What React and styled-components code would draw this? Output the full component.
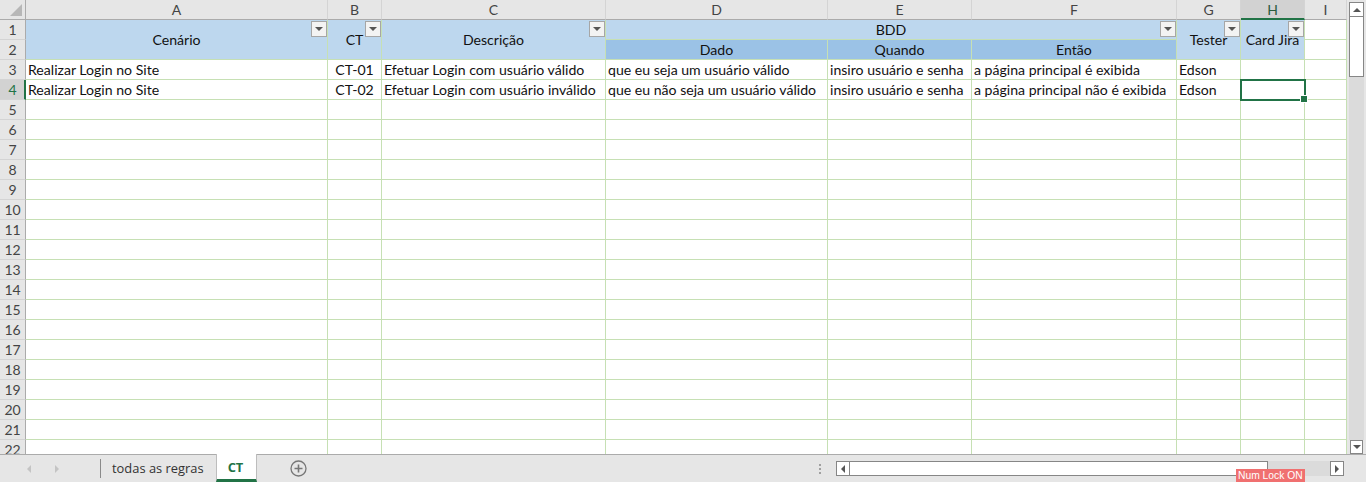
import React from "react";
import styled, { createGlobalStyle, css } from "styled-components";

const COLOR = {
  head: "#e6e6e6",
  headSel: "#d2d2d2",
  headLine: "#ababab",
  headSep: "#d4d4d4",
  grid: "#c6e0b4",
  blue: "#bdd7ee",
  blueDark: "#9bc2e6",
  green: "#217346",
  bar: "#e6e6e6",
};

const GlobalStyle = createGlobalStyle`
  html, body {
    margin: 0;
    padding: 0;
    background: #fff;
    overflow: hidden;
  }
  * { box-sizing: border-box; }
`;

const Window = styled.div`
  width: 1366px;
  height: 482px;
  display: flex;
  flex-direction: column;
  position: relative;
  font-family: Lato, "Liberation Sans", sans-serif;
  overflow: hidden;
`;

const Main = styled.div`
  flex: 1;
  display: flex;
  min-height: 0;
  border-bottom: 1px solid ${COLOR.headLine};
`;

const Sheet = styled.div`
  flex: 1;
  display: grid;
  grid-template-columns: 26px 302px 54px 224px 222px 144px 205px 64px 64px 1fr;
  grid-template-rows: repeat(23, 20px);
  overflow: hidden;
`;

const Corner = styled.div`
  background: ${COLOR.head};
  border-right: 1px solid ${COLOR.headLine};
  border-bottom: 1px solid ${COLOR.headLine};
  position: relative;
  &::after {
    content: "";
    position: absolute;
    right: 3px;
    bottom: 3px;
    border-style: solid;
    border-width: 0 0 12px 12px;
    border-color: transparent transparent #b7b7b7 transparent;
  }
`;

const ColHead = styled.div`
  background: ${(p) => (p.$selected ? COLOR.headSel : COLOR.head)};
  border-right: 1px solid ${COLOR.headSep};
  border-bottom: ${(p) => (p.$selected ? `2px solid ${COLOR.green}` : `1px solid ${COLOR.headLine}`)};
  color: ${(p) => (p.$selected ? "#2b5d3e" : "#444")};
  font-size: 14px;
  display: flex;
  align-items: center;
  justify-content: center;
  padding-top: ${(p) => (p.$selected ? "1px" : "0")};
`;

const RowHead = styled.div`
  background: ${(p) => (p.$selected ? COLOR.headSel : COLOR.head)};
  border-right: ${(p) => (p.$selected ? `2px solid ${COLOR.green}` : `1px solid ${COLOR.headLine}`)};
  border-bottom: 1px solid ${COLOR.headSep};
  color: ${(p) => (p.$selected ? COLOR.green : "#444")};
  font-size: 14px;
  display: flex;
  align-items: center;
  justify-content: center;
  padding-left: ${(p) => (p.$selected ? "1px" : "0")};
`;

const Cell = styled.div`
  position: relative;
  grid-row: span ${(p) => p.$rows || 1};
  grid-column: span ${(p) => p.$cols || 1};
  background: ${(p) => p.$bg || "#fff"};
  border-right: 1px solid ${COLOR.grid};
  border-bottom: 1px solid ${COLOR.grid};
  font-size: 14.1px;
  color: #111;
  white-space: nowrap;
  padding: 0 2px;
  display: flex;
  align-items: center;
  justify-content: ${(p) => (p.$center ? "center" : "flex-start")};
`;

const FilterButton = styled.span`
  position: absolute;
  top: 1px;
  right: 0;
  width: 16px;
  height: 16px;
  background: #f3f3f3;
  border: 1px solid #a6a6a6;
  z-index: 2;
  &::after {
    content: "";
    position: absolute;
    left: 3px;
    top: 5px;
    border-style: solid;
    border-width: 4px 4px 0 4px;
    border-color: #555 transparent transparent transparent;
  }
`;

const Selection = styled.span`
  position: absolute;
  left: -1px;
  top: -1px;
  width: 66px;
  height: 22px;
  border: 2px solid ${COLOR.green};
  z-index: 3;
  &::after {
    content: "";
    position: absolute;
    right: -4px;
    bottom: -4px;
    width: 6px;
    height: 6px;
    background: ${COLOR.green};
    border: 1px solid #fff;
  }
`;

const VScroll = styled.div`
  width: 19px;
  background: ${COLOR.bar};
  display: flex;
  flex-direction: column;
  align-items: center;
  padding: 2px 2px 0 2px;
`;

const ScrollButton = styled.div`
  width: ${(p) => p.$w || 15}px;
  height: ${(p) => p.$h || 15}px;
  border: 1px solid #868686;
  background: #fff;
  display: flex;
  align-items: center;
  justify-content: center;
  flex-shrink: 0;
`;

const VThumb = styled.div`
  width: 15px;
  height: 60px;
  background: #fff;
  border: 1px solid #868686;
  border-top: none;
`;

const VTrack = styled.div`
  flex: 1;
  width: 15px;
  background: #dbdbdb;
`;

const Arrow = styled.span`
  width: 0;
  height: 0;
  border-style: solid;
  ${(p) =>
    p.$dir === "up" &&
    css`
      border-width: 0 4px 4px 4px;
      border-color: transparent transparent ${p.$c || "#555"} transparent;
    `}
  ${(p) =>
    p.$dir === "down" &&
    css`
      border-width: 4px 4px 0 4px;
      border-color: ${p.$c || "#555"} transparent transparent transparent;
    `}
  ${(p) =>
    p.$dir === "left" &&
    css`
      border-width: 4px 4px 4px 0;
      border-color: transparent ${p.$c || "#555"} transparent transparent;
    `}
  ${(p) =>
    p.$dir === "right" &&
    css`
      border-width: 4px 0 4px 4px;
      border-color: transparent transparent transparent ${p.$c || "#555"};
    `}
`;

const TabBar = styled.div`
  height: 27px;
  background: ${COLOR.bar};
  display: flex;
  align-items: stretch;
  font-family: "Open Sans", "Liberation Sans", sans-serif;
`;

const NavArrows = styled.div`
  width: 100px;
  display: flex;
  align-items: center;
  padding-left: 15px;
`;

const NavBox = styled.div`
  width: 28px;
  display: flex;
  justify-content: center;
`;

const Divider = styled.div`
  width: 1px;
  margin: 4px 0 4px;
  background: #8a8a8a;
`;

const Tab = styled.div`
  padding: 0 12px 2px 11px;
  display: flex;
  align-items: center;
  font-size: 12.9px;
  color: ${(p) => (p.$active ? COLOR.green : "#333")};
  font-weight: ${(p) => (p.$active ? 700 : 400)};
  ${(p) =>
    p.$active &&
    css`
      background: #fff;
      border-left: 1px solid #bdbdbd;
      border-right: 1px solid #bdbdbd;
      border-bottom: 3px solid ${COLOR.green};
      margin-top: -1px;
      padding: 0 13px 0 11px;
    `}
`;

const AddSheet = styled.div`
  margin-left: 33px;
  display: flex;
  align-items: center;
`;

const Dots = styled.div`
  margin: 0 8px 0 auto;
  width: 16px;
  display: flex;
  flex-direction: column;
  align-items: center;
  justify-content: center;
  gap: 2px;
  span {
    width: 2px;
    height: 2px;
    background: #a0a0a0;
  }
`;

const HScroll = styled.div`
  width: 508px;
  margin: 6px 22px 0 0;
  height: 15px;
  display: flex;
`;

const HThumb = styled.div`
  width: 418px;
  background: #fff;
  border: 1px solid #868686;
  border-left: none;
`;

const HTrack = styled.div`
  flex: 1;
  background: #dbdbdb;
`;

const NumLock = styled.div`
  position: absolute;
  left: 1236px;
  bottom: 0;
  height: 13px;
  padding: 0 2px;
  background: #f07070;
  color: #fff;
  font-family: "Liberation Sans", sans-serif;
  font-size: 10.3px;
  line-height: 13px;
`;

const COLS = ["A", "B", "C", "D", "E", "F", "G", "H", "I"];

const ROWS = [
  ["Realizar Login no Site", "CT-01", "Efetuar Login com usuário válido", "que eu seja um usuário válido", "insiro usuário e senha", "a página principal é exibida", "Edson"],
  ["Realizar Login no Site", "CT-02", "Efetuar Login com usuário inválido", "que eu não seja um usuário válido", "insiro usuário e senha", "a página principal não é exibida", "Edson"],
];

const Filtered = ({ children, ...rest }) => (
  <Cell {...rest}>
    {children}
    <FilterButton />
  </Cell>
);

const HeaderBand = () => (
  <>
    <RowHead>1</RowHead>
    <Filtered $rows={2} $bg={COLOR.blue} $center>Cenário</Filtered>
    <Filtered $rows={2} $bg={COLOR.blue} $center>CT</Filtered>
    <Filtered $rows={2} $bg={COLOR.blue} $center>Descrição</Filtered>
    <Filtered $cols={3} $bg={COLOR.blue} $center>BDD</Filtered>
    <Filtered $rows={2} $bg={COLOR.blue} $center>Tester</Filtered>
    <Filtered $rows={2} $bg={COLOR.blue} $center>Card Jira</Filtered>
    <Cell />
    <RowHead>2</RowHead>
    <Cell $bg={COLOR.blueDark} $center>Dado</Cell>
    <Cell $bg={COLOR.blueDark} $center>Quando</Cell>
    <Cell $bg={COLOR.blueDark} $center>Então</Cell>
    <Cell />
  </>
);

const DataRow = ({ n, values, selectedCol }) => (
  <>
    <RowHead $selected={selectedCol != null}>{n}</RowHead>
    {COLS.map((c, i) => (
      <Cell key={c} $center={i === 1}>
        {values ? values[i] : null}
        {selectedCol === i && <Selection />}
      </Cell>
    ))}
  </>
);

export default function App() {
  const emptyRows = [];
  for (let n = 5; n <= 22; n++) emptyRows.push(n);

  return (
    <Window>
      <GlobalStyle />
      <Main>
        <Sheet>
          <Corner />
          {COLS.map((c) => (
            <ColHead key={c} $selected={c === "H"}>{c}</ColHead>
          ))}
          <HeaderBand />
          <DataRow n={3} values={ROWS[0]} />
          <DataRow n={4} values={ROWS[1]} selectedCol={7} />
          {emptyRows.map((n) => (
            <DataRow key={n} n={n} />
          ))}
        </Sheet>
        <VScroll>
          <ScrollButton><Arrow $dir="up" /></ScrollButton>
          <VThumb />
          <VTrack />
          <ScrollButton $w={13} $h={14}><Arrow $dir="down" /></ScrollButton>
        </VScroll>
      </Main>
      <TabBar>
        <NavArrows>
          <NavBox><Arrow $dir="left" $c="#c4c4c4" /></NavBox>
          <NavBox><Arrow $dir="right" $c="#c4c4c4" /></NavBox>
        </NavArrows>
        <Divider />
        <Tab>todas as regras</Tab>
        <Tab $active>CT</Tab>
        <AddSheet>
          <svg width="17" height="17" viewBox="0 0 17 17">
            <circle cx="8.5" cy="8.5" r="7.5" fill="none" stroke="#777" strokeWidth="1.3" />
            <path d="M8.5 4.5v8M4.5 8.5h8" stroke="#777" strokeWidth="1.6" />
          </svg>
        </AddSheet>
        <Dots><span /><span /><span /></Dots>
        <HScroll>
          <ScrollButton $w={14}><Arrow $dir="left" /></ScrollButton>
          <HThumb />
          <HTrack />
          <ScrollButton $w={14}><Arrow $dir="right" /></ScrollButton>
        </HScroll>
      </TabBar>
      <NumLock>Num Lock ON</NumLock>
    </Window>
  );
}
